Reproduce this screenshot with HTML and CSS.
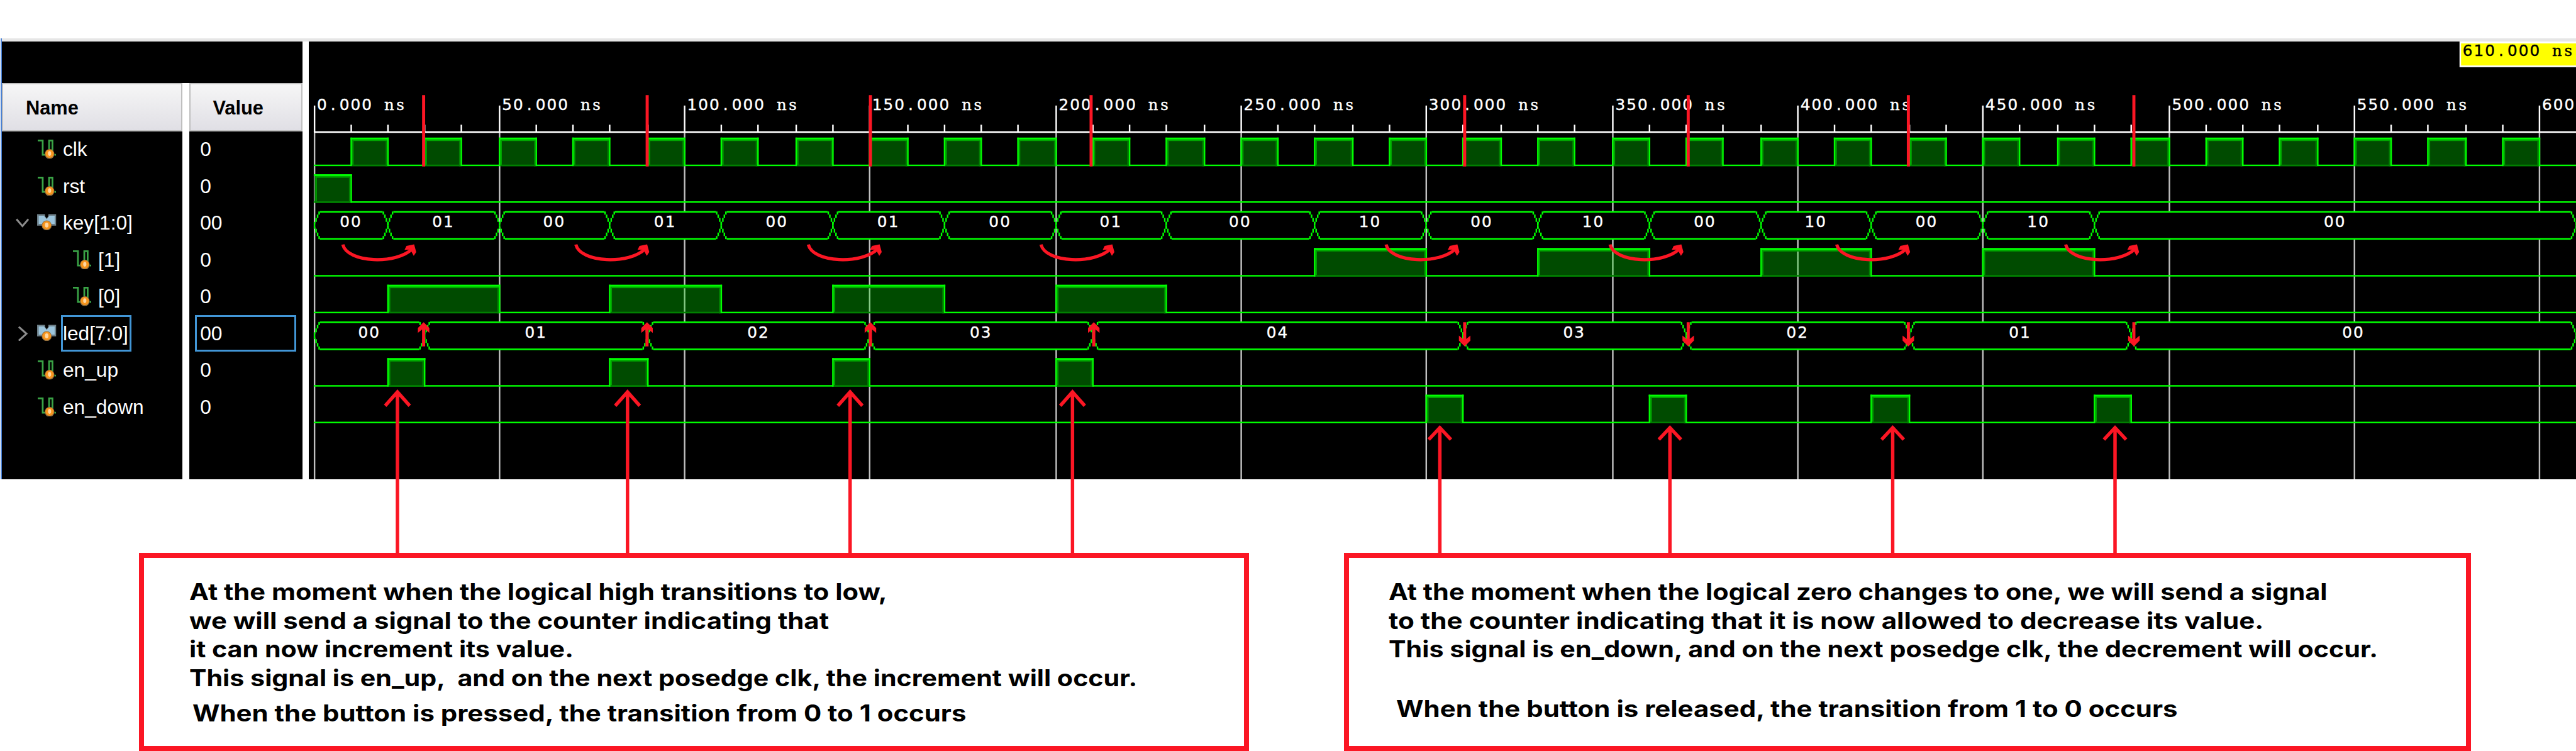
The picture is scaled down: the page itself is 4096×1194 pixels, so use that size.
FILE: index.html
```html
<!DOCTYPE html>
<html lang="en">
<head>
<meta charset="utf-8">
<title>Waveform viewer</title>
<link rel="stylesheet" href="styles.css">
</head>
<body>
<svg class="defs" aria-hidden="true">
  <symbol id="signal" viewBox="0 0 12 12" preserveAspectRatio="none">
    <path d="M.4 .5H3.5V9.5H5M7.5 6V.5H9.6V7M10.8 9.5h1" fill="none" stroke="#3aa346" stroke-width="1.1"/>
    <ellipse cx="7.8" cy="9" rx="3" ry="3.1" fill="#94703f"/>
    <ellipse cx="7.8" cy="8.8" rx="2.6" ry="2.6" fill="#f7941d"/>
    <ellipse cx="7.8" cy="8.7" rx="1" ry="1.5" fill="#ffd7a0"/>
  </symbol>
  <symbol id="bus" viewBox="0 0 12 11" preserveAspectRatio="none">
    <path d="M.5 1.5H4.6L6 3.4 7.4 1.5H11.5V7.6H.5Z" fill="#9bc4dc" stroke="#6d7f88"/>
    <path d="M5 0H7V2.4L6 3.6 5 2.4Z" fill="#000"/>
    <ellipse cx="6" cy="8" rx="3.1" ry="3.1" fill="#94703f"/>
    <ellipse cx="6" cy="7.9" rx="2.7" ry="2.6" fill="#f7941d"/>
    <ellipse cx="6" cy="7.8" rx="1.1" ry="1.5" fill="#ffd7a0"/>
  </symbol>
</svg>

<main class="page">
  <div class="strip"></div>
  <section class="viewer">
    <div class="edge"></div>
    <div class="column names">
      <div class="head">Name</div>
      <div class="row"><i class="chevron"></i><svg class="icon"><use href="#signal"/></svg><span class="label">clk</span></div>
      <div class="row"><i class="chevron"></i><svg class="icon"><use href="#signal"/></svg><span class="label">rst</span></div>
      <div class="row"><svg class="chevron" viewBox="0 0 35 38"><path d="M2 9L17.500 27L33 9"/></svg><svg class="icon bus"><use href="#bus"/></svg><span class="label">key[1:0]</span></div>
      <div class="row child"><i class="chevron"></i><svg class="icon"><use href="#signal"/></svg><span class="label">[1]</span></div>
      <div class="row child"><i class="chevron"></i><svg class="icon"><use href="#signal"/></svg><span class="label">[0]</span></div>
      <div class="row"><svg class="chevron" viewBox="0 0 35 38"><path d="M8 1L28 19L8 37"/></svg><svg class="icon bus"><use href="#bus"/></svg><span class="label selected">led[7:0]</span></div>
      <div class="row"><i class="chevron"></i><svg class="icon"><use href="#signal"/></svg><span class="label">en_up</span></div>
      <div class="row"><i class="chevron"></i><svg class="icon"><use href="#signal"/></svg><span class="label">en_down</span></div>
    </div>
    <div class="column values">
      <div class="head">Value</div>
      <div class="value">0</div>
      <div class="value">0</div>
      <div class="value">00</div>
      <div class="value">0</div>
      <div class="value">0</div>
      <div class="value selected">00</div>
      <div class="value">0</div>
      <div class="value">0</div>
    </div>
    <svg class="waves" id="waves" viewBox="805 108 5913 1142" preserveAspectRatio="none"></svg>
  </section>

  <section class="notes">
    <article class="note">
      <p data-width="1820">At the moment when the logical high transitions to low,</p>
      <p data-width="1668">we will send a signal to the counter indicating that</p>
      <p data-width="1002">it can now increment its value.</p>
      <p data-width="2472">This signal is en_up,&nbsp; and on the next posedge clk, the increment will occur.</p>
      <p class="last" data-width="2018">When the button is pressed, the transition from 0 to 1 occurs</p>
    </article>
    <article class="note second">
      <p data-width="2448">At the moment when the logical zero changes to one, we will send a signal</p>
      <p data-width="2282">to the counter indicating that it is now allowed to decrease its value.</p>
      <p data-width="2580">This signal is en_down, and on the next posedge clk, the decrement will occur.</p>
      <p class="last" data-width="2038">When the button is released, the transition from 1 to 0 occurs</p>
    </article>
  </section>

  <svg class="marks" id="marks" viewBox="0 0 6718 1958" preserveAspectRatio="none"></svg>
</main>
<script src="script.js"></script>
</body>
</html>
```
FILE: styles.css
```css
:root {
  --u: 0.6097px;
  --red: #fb1624;
}

* { box-sizing: border-box; }

body {
  margin: 0;
  background: #fff;
  overflow: hidden;
  font-family: "Liberation Sans", Arial, sans-serif;
}

.defs { position: absolute; width: 0; height: 0; }

.page {
  position: relative;
  width: 4096px;
  height: 1194px;
  padding-top: calc(100 * var(--u));
  display: flex;
  flex-direction: column;
  overflow: hidden;
}

.strip {
  height: calc(8 * var(--u));
  margin-left: calc(5 * var(--u));
  background: #e6e6e6;
  flex: none;
}

.viewer {
  display: grid;
  grid-template-columns: calc(5 * var(--u)) calc(471 * var(--u)) calc(296 * var(--u)) 1fr;
  height: calc(1142 * var(--u));
  flex: none;
}

.edge {
  margin: calc(-8 * var(--u)) 0 0 calc(1 * var(--u));
  background: #4a80d2;
}

.column {
  background: #000;
  color: #fff;
  padding-top: calc(109 * var(--u));
  font-size: calc(52 * var(--u));
  white-space: nowrap;
}

.values { margin: 0 calc(-17 * var(--u)) 0 calc(17 * var(--u)); position: relative; }

/* the header band is split by the divider only below the empty top area */
.values::before {
  content: "";
  position: absolute;
  left: calc(-17 * var(--u));
  top: 0;
  width: calc(17 * var(--u));
  height: calc(109 * var(--u));
  background: #000;
}

.head {
  height: calc(125 * var(--u));
  border: calc(4 * var(--u)) solid #bfbfbf;
  background: linear-gradient(#f6f6f6, #e0dfe5);
  color: #000;
  font-weight: bold;
  font-size: calc(50.5 * var(--u));
  display: flex;
  align-items: center;
  padding: calc(5 * var(--u)) 0 0 calc(59 * var(--u));
}

.row {
  height: calc(95.9 * var(--u));
  padding-left: calc(36 * var(--u));
  display: flex;
  align-items: center;
}

.row.child { padding-left: calc(128 * var(--u)); }

.chevron {
  width: calc(35 * var(--u));
  height: calc(38 * var(--u));
  margin-right: calc(21 * var(--u));
  fill: none;
  stroke: #8c8c8c;
  stroke-width: 5;
  flex: none;
}

.icon {
  width: calc(50 * var(--u));
  height: calc(50 * var(--u));
  margin-right: calc(12 * var(--u));
  flex: none;
}

.icon.bus { height: calc(46 * var(--u)); margin-bottom: calc(8 * var(--u)); }

.label {
  height: 100%;
  display: flex;
  align-items: center;
  border: calc(5 * var(--u)) solid transparent;
}

.label.selected { width: calc(184 * var(--u)); }

.value {
  height: calc(95.9 * var(--u));
  width: calc(263 * var(--u));
  margin-left: calc(16 * var(--u));
  padding-left: calc(8 * var(--u));
  border: calc(5 * var(--u)) solid transparent;
  display: flex;
  align-items: center;
}

.label.selected, .value.selected { border-color: #4296d6; }

.waves {
  display: block;
  width: calc(5913 * var(--u));
  height: calc(1142 * var(--u));
  margin-left: calc(33 * var(--u));
  background: #000;
}

.digits { font-family: "DejaVu Sans", sans-serif; font-size: 40.5px; stroke-width: 0.7px; }
.unit { font-family: "DejaVu Serif", serif; font-size: 40px; stroke-width: 0.7px; }

.notes {
  display: grid;
  grid-template-columns: calc(2895 * var(--u)) calc(2939 * var(--u));
  column-gap: calc(248 * var(--u));
  margin: calc(192 * var(--u)) 0 0 calc(362 * var(--u));
  height: calc(516 * var(--u));
  flex: none;
}

.note {
  border: calc(13.500 * var(--u)) solid var(--red);
  padding: calc(52 * var(--u)) 0 0 calc(119 * var(--u));
  font: 700 calc(59.5 * var(--u)) / calc(75 * var(--u)) Inter, sans-serif;
  color: #000;
}

.note.second { padding-left: calc(103 * var(--u)); }

.note p {
  margin: 0;
  width: max-content;
  white-space: nowrap;
  transform-origin: left;
}

.note .last { margin: calc(16 * var(--u)) 0 0 calc(7 * var(--u)); }
.note.second .last { margin: calc(80 * var(--u)) 0 0 calc(20 * var(--u)); }

.marks {
  position: absolute;
  inset: 0;
  width: 100%;
  height: 100%;
}
```
FILE: script.js
```js
const SCALE = 0.6097;
const GREEN = '#00ff00';
const END = 610;

// Horizontal position of a time, snapped to the viewer's pixel grid.
const timeX = t => 820 + Math.floor(2.4264 * t - (t ? 0.2 : 0)) * 3.988;

const rect = (x, y, w, h, fill, extra = '') =>
  `<rect x="${x}" y="${y}" width="${w}" height="${h}" fill="${fill}" ${extra}/>`;

// Fixed-pitch text: every glyph is centred in a cell of its own.
const PITCH = 29.2;
const ADV = { '.': 12.9, n: 25.8, s: 20.5 };
function mono(text, x, y, fill) {
  const place = (chars, from) =>
    [...chars].map((c, i) => (x + (from + i) * PITCH + (25.8 - (ADV[c] || 25.8)) / 2).toFixed(1)).join(' ');
  const [num, unit] = text.split(' ');
  const paint = `fill="${fill}" stroke="${fill}"`;
  let out = `<text class="digits" y="${y}" ${paint} x="${place(num, 0)}">${num}</text>`;
  if (unit) out += `<text class="unit" y="${y}" ${paint} x="${place(unit, num.length + 1)}">${unit}</text>`;
  return out;
}

function wave(base, highs) {
  let s = rect(818, base - 2, 5900, 4, GREEN);
  const top = base - 72.5;
  for (const [a, b] of highs) {
    const x0 = timeX(a), x1 = timeX(b), w = x1 - x0;
    s += rect(x0, top + 4, w, 70.5, '#004b00');
    for (let g = 50; g <= 600; g += 50)
      if (g > a && g < b) s += rect(timeX(g) - 2, top + 9, 4, 66, '#87cb87');
    s += rect(x0 + 2, top + 4, w - 4, 5, '#00a600');
    s += rect(x0 + 2, top + 4, 4, 67, '#00a000');
    s += rect(x1 - 6, top + 9, 4, 66, '#008000');
    s += rect(x0 + 2, base - 2, w - 4, 4, '#008000');
    s += rect(x0 - 2, top, w + 4, 4.8, GREEN);
    if (a) s += rect(x0 - 2, top, 4, 74.5, GREEN);
    s += rect(x1 - 2, top, 4, 74.5, GREEN);
  }
  return s;
}

function bus(top, bottom, changes) {
  const mid = (top + bottom) / 2;
  const steps = [[0, 0, 9], [4, 9, 19], [8, 19, 28], [12, 28, 36]];
  let s = '';
  changes.forEach(([t, value], i) => {
    const x0 = timeX(t);
    const x1 = timeX(i + 1 < changes.length ? changes[i + 1][0] : END);
    s += `<path d="M${x0} ${mid}L${x0 + 15} ${top}H${x1 - 15}L${x1} ${mid}L${x1 - 15} ${bottom}H${x0 + 15}Z" fill="#000"/>`;
    s += rect(x0 + 14, top - 2, x1 - x0 - 28, 4.3, GREEN);
    s += rect(x0 + 14, bottom - 2, x1 - x0 - 28, 4.3, GREEN);
    for (const [dx, a, b] of steps) {
      for (const x of [x0 + dx - 2, x1 - dx - 2]) {
        s += rect(x, mid - b, 4, b - a, GREEN) + rect(x, mid + a, 4, b - a, GREEN);
      }
    }
    s += mono(value, (x0 + x1) / 2 - 30, top + 40, '#fff');
  });
  return s;
}

let w = '';
for (let t = 0; t <= 600; t += 10) {
  const x = timeX(t) - 2;
  if (t % 50) w += rect(x, 325, 4, 19, '#fff');
  else {
    w += rect(x, 275, 4, 69, '#fff') + rect(x, 346, 4, 904, '#c0c0c0');
    // only the leading digits of the last label fit in the view
    w += mono(t === 600 ? '600' : `${t}.000 ns`, x + 8.500, 287.500, '#fff');
  }
}
w += rect(818, 342, 5900, 4.3, '#fff');

const clk = [];
for (let t = 10; t < 610; t += 20) clk.push([t, t + 10]);
w += wave(431, clk);
w += wave(526.6, [[0, 10]]);
w += bus(552, 622.5, [[0, '00'], [20, '01'], [50, '00'], [80, '01'], [110, '00'], [140, '01'],
  [170, '00'], [200, '01'], [230, '00'], [270, '10'], [300, '00'], [330, '10'], [360, '00'],
  [390, '10'], [420, '00'], [450, '10'], [480, '00']]);
w += wave(718.9, [[270, 300], [330, 360], [390, 420], [450, 480]]);
w += wave(814.7, [[20, 50], [80, 110], [140, 170], [200, 230]]);
w += bus(840, 910.5, [[0, '00'], [30, '01'], [90, '02'], [150, '03'], [210, '04'], [310, '03'],
  [370, '02'], [430, '01'], [490, '00']]);
w += wave(1005.9, [[20, 30], [80, 90], [140, 150], [200, 210]]);
w += wave(1101.5, [[300, 310], [360, 370], [420, 430], [480, 490]]);
w += rect(6414, 108, 304, 67, '#fff') + rect(6418, 113, 300, 57.5, '#ffff00');
w += mono('610.000 ns', 6422, 146, '#000');
document.getElementById('waves').innerHTML = w;

const RED = '#fb1624';
let m = '';
for (const x of [1104.8, 1687.8, 2270, 2845.5, 3819.7, 4402.7, 4976.8, 5565])
  m += rect(x - 4, 248, 8, 186, RED);
for (const x of [1104.8, 1687.4, 2270, 2852.5])
  m += `<path fill="${RED}" d="M${x} 840l15 15v13l-11-9v44h-8v-44l-11 9v-13z"/>`;
for (const x of [3819.7, 4402.7, 4976.8, 5565])
  m += `<path fill="${RED}" d="M${x} 903l15-15v-13l-11 9v-44h-8v44l-11-9v13z"/>`;
for (const x of [1080, 1687.7, 2294, 2900.8, 3800.7, 4384.8, 4975.9, 5573]) {
  m += `<path fill="none" stroke="${RED}" stroke-width="8.5" d="M${x - 186} 637.5c12 49 142 52 181 11"/>`;
  m += `<path fill="${RED}" d="M${x} 637l-20 4l-5 10.500l15-1l9 16.500l6.500-10z"/>`;
}
const pointer = (x, y, dx, dy) =>
  `<path fill="none" stroke="${RED}" stroke-width="9" d="M${x} 1444V${y + 6}M${x - dx} ${y + dy}L${x} ${y + 6}L${x + dx} ${y + dy}"/>`;
for (const x of [1036.5, 1636.5, 2217, 2797]) m += pointer(x, 1016, 32, 42);
for (const x of [3755, 4355, 4936, 5515.8]) m += pointer(x, 1109, 29, 37);
document.getElementById('marks').innerHTML = m;

for (const p of document.querySelectorAll('[data-width]')) {
  const target = p.dataset.width * SCALE;
  p.style.transform = `scaleX(${target / p.getBoundingClientRect().width})`;
}
```
